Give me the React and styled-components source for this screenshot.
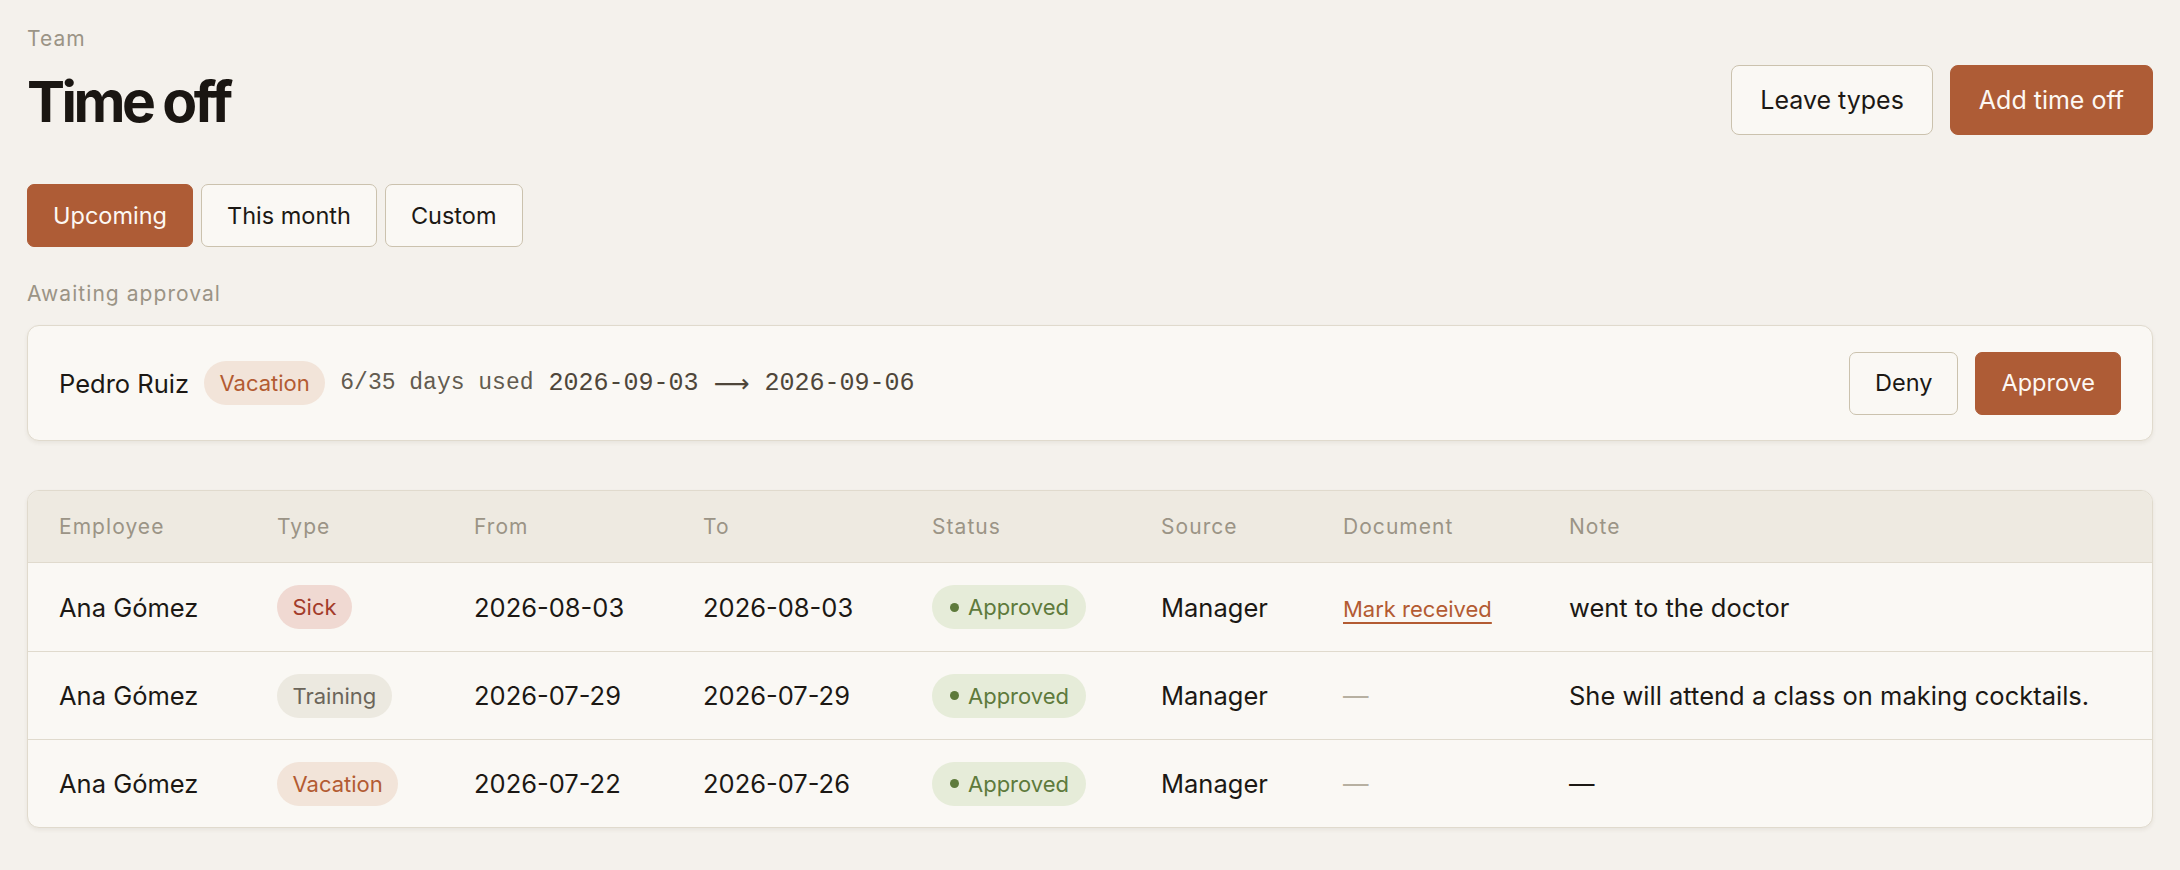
import React from 'react'
import styled, { createGlobalStyle, css } from 'styled-components'

const GlobalStyle = createGlobalStyle`
  * {
    box-sizing: border-box;
  }
  body {
    margin: 0;
    background: #f4f1ec;
    color: #1c1814;
    font-family: Inter, "Noto Sans", sans-serif;
  }
`

const Page = styled.main`
  padding: 24px 27px 40px 27px;
`

const Header = styled.header`
  display: flex;
  justify-content: space-between;
  align-items: flex-end;
`

const Eyebrow = styled.div`
  font-size: 21px;
  line-height: 29px;
  letter-spacing: 0.05em;
  color: #9b9486;
`

const Title = styled.h1`
  margin: 14px 0 0;
  font-size: 57px;
  line-height: 69px;
  font-weight: 700;
  letter-spacing: -0.062em;
  color: #1a1612;
`

const Actions = styled.div`
  display: flex;
  gap: 17px;
  margin-bottom: ${p => (p.$lift ? '1.5px' : '0')};
`

const Button = styled.button`
  font-family: inherit;
  font-size: ${p => (p.$size === 'lg' ? '25px' : '23.5px')};
  line-height: 32px;
  padding: ${p => (p.$size === 'lg' ? '18px 28px' : '14.5px 25px')};
  border-radius: ${p => (p.$size === 'lg' ? '8px' : '7px')};
  border: 1.5px solid #cbc2ae;
  background: #faf8f4;
  color: #1c1814;
  cursor: pointer;

  ${p =>
    p.$primary &&
    css`
      background: #ae5c36;
      border-color: #ae5c36;
      color: #fdf8f3;
    `}
`

const Tabs = styled.div`
  display: flex;
  gap: 8px;
  margin-top: 48px;
`

const SectionLabel = styled.div`
  margin-top: 32px;
  font-size: 21px;
  line-height: 29px;
  letter-spacing: 0.05em;
  color: #9b9486;
`

const RequestCard = styled.div`
  margin-top: 17px;
  display: flex;
  align-items: center;
  justify-content: space-between;
  padding: 25.5px 31px;
  background: #faf8f4;
  border: 1.5px solid #e0dacd;
  border-radius: 12px;
  box-shadow: 0 2px 4px rgba(70, 55, 30, 0.07);
`

const RequestInfo = styled.div`
  display: flex;
  align-items: center;
  gap: 15px;
`

const Name = styled.span`
  font-size: 25.5px;
  line-height: 35px;
`

const Mono = styled.span`
  font-family: "Liberation Mono", "DejaVu Sans Mono", monospace;
  font-size: ${p => (p.$big ? '25px' : '23px')};
  color: ${p => (p.$big ? '#4e463a' : '#625b4f')};
`

const Arrow = styled.span`
  font-family: "DejaVu Sans", sans-serif;
  font-size: 25px;
  color: #4e463a;
`

const badgeTones = {
  vacation: { bg: '#f2e4d9', fg: '#b35b32' },
  sick: { bg: '#f0d9d2', fg: '#a33b2a' },
  training: { bg: '#ece9e0', fg: '#6b655a' },
  approved: { bg: '#e6ecd9', fg: '#5e7a3c' },
}

const Badge = styled.span`
  display: inline-flex;
  align-items: center;
  gap: 9px;
  height: 44px;
  padding: ${p => (p.$tone === 'approved' ? '0 17px 0 18px' : '0 15.5px')};
  border-radius: 22px;
  font-size: 22px;
  background: ${p => badgeTones[p.$tone].bg};
  color: ${p => badgeTones[p.$tone].fg};
`

const Dot = styled.span`
  width: 9px;
  height: 9px;
  border-radius: 50%;
  background: currentColor;
`

const TableCard = styled.div`
  margin-top: 49px;
  background: #faf8f4;
  border: 1.5px solid #e0dacd;
  border-radius: 12px;
  overflow: hidden;
  box-shadow: 0 2px 4px rgba(70, 55, 30, 0.07);
`

const Table = styled.table`
  width: 100%;
  border-collapse: separate;
  border-spacing: 0;
  table-layout: fixed;
`

const Th = styled.th`
  height: 72px;
  padding: 0 31px;
  text-align: left;
  font-weight: 400;
  font-size: 21px;
  letter-spacing: 0.05em;
  color: #9b9486;
  background: #eeeae1;
  border-bottom: 1.5px solid #e0dacd;
`

const Row = styled.tr`
  & + & td {
    border-top: 1.5px solid #e0dacd;
  }
`

const Td = styled.td`
  height: 88px;
  padding: 0 31px;
  font-size: 25.5px;
  vertical-align: middle;
  white-space: nowrap;
`

const Empty = styled.span`
  color: ${p => (p.$muted ? '#b7b0a1' : '#1c1814')};
`

const DocLink = styled.a`
  font-size: 22px;
  color: #b35b32;
  text-decoration: underline;
  text-decoration-thickness: 2px;
  text-underline-offset: 5px;
  cursor: pointer;
`

const columns = [
  { label: 'Employee', width: 218 },
  { label: 'Type', width: 197 },
  { label: 'From', width: 229 },
  { label: 'To', width: 229 },
  { label: 'Status', width: 229 },
  { label: 'Source', width: 182 },
  { label: 'Document', width: 226 },
  { label: 'Note' },
]

const leaves = [
  {
    employee: 'Ana Gómez',
    type: 'sick',
    from: '2026-08-03',
    to: '2026-08-03',
    source: 'Manager',
    needsDocument: true,
    note: 'went to the doctor',
  },
  {
    employee: 'Ana Gómez',
    type: 'training',
    from: '2026-07-29',
    to: '2026-07-29',
    source: 'Manager',
    needsDocument: false,
    note: 'She will attend a class on making cocktails.',
  },
  {
    employee: 'Ana Gómez',
    type: 'vacation',
    from: '2026-07-22',
    to: '2026-07-26',
    source: 'Manager',
    needsDocument: false,
    note: '',
  },
]

const typeLabels = { sick: 'Sick', training: 'Training', vacation: 'Vacation' }

const App = () => (
  <>
    <GlobalStyle />
    <Page>
      <Header>
        <div>
          <Eyebrow>Team</Eyebrow>
          <Title>Time off</Title>
        </div>
        <Actions $lift>
          <Button $size="lg">Leave types</Button>
          <Button $size="lg" $primary>
            Add time off
          </Button>
        </Actions>
      </Header>

      <Tabs>
        <Button $primary>Upcoming</Button>
        <Button>This month</Button>
        <Button>Custom</Button>
      </Tabs>

      <SectionLabel>Awaiting approval</SectionLabel>
      <RequestCard>
        <RequestInfo>
          <Name>Pedro Ruiz</Name>
          <Badge $tone="vacation">Vacation</Badge>
          <Mono>6/35 days used</Mono>
          <Mono $big>2026-09-03</Mono>
          <Arrow>⟶</Arrow>
          <Mono $big>2026-09-06</Mono>
        </RequestInfo>
        <Actions>
          <Button>Deny</Button>
          <Button $primary>Approve</Button>
        </Actions>
      </RequestCard>

      <TableCard>
        <Table>
          <colgroup>
            {columns.map(c => (
              <col key={c.label} width={c.width} />
            ))}
          </colgroup>
          <thead>
            <tr>
              {columns.map(c => (
                <Th key={c.label}>{c.label}</Th>
              ))}
            </tr>
          </thead>
          <tbody>
            {leaves.map((l, i) => (
              <Row key={i}>
                <Td>{l.employee}</Td>
                <Td>
                  <Badge $tone={l.type}>{typeLabels[l.type]}</Badge>
                </Td>
                <Td>{l.from}</Td>
                <Td>{l.to}</Td>
                <Td>
                  <Badge $tone="approved">
                    <Dot />
                    Approved
                  </Badge>
                </Td>
                <Td>{l.source}</Td>
                <Td>
                  {l.needsDocument ? (
                    <DocLink>Mark received</DocLink>
                  ) : (
                    <Empty $muted>—</Empty>
                  )}
                </Td>
                <Td>{l.note || <Empty>—</Empty>}</Td>
              </Row>
            ))}
          </tbody>
        </Table>
      </TableCard>
    </Page>
  </>
)

export default App
